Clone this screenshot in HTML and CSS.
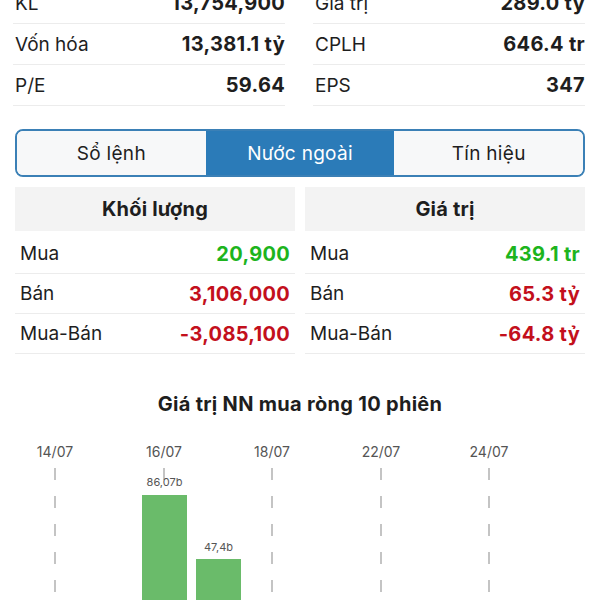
FILE: index.html
```html
<!DOCTYPE html>
<html lang="vi">
<head>
    <meta charset="UTF-8">
    <meta name="viewport" content="width=device-width, initial-scale=1.0">
    <title>Nước ngoài</title>
    <link rel="stylesheet" href="styles.css">
</head>
<body>
    <div class="stats">
        <div class="statsCol">
            <div class="statRow"><span>KL</span><b>13,754,900</b></div>
            <div class="statRow"><span>Vốn hóa</span><b>13,381.1 tỷ</b></div>
            <div class="statRow"><span>P/E</span><b>59.64</b></div>
        </div>
        <div class="statsCol">
            <div class="statRow"><span>Giá trị</span><b>289.0 tỷ</b></div>
            <div class="statRow"><span>CPLH</span><b>646.4 tr</b></div>
            <div class="statRow"><span>EPS</span><b>347</b></div>
        </div>
    </div>

    <div class="tabs">
        <div class="tab">Sổ lệnh</div>
        <div class="tab active">Nước ngoài</div>
        <div class="tab">Tín hiệu</div>
    </div>

    <div class="foreign">
        <div class="foreignCol">
            <div class="foreignHead">Khối lượng</div>
            <div class="foreignRow"><span>Mua</span><b class="up">20,900</b></div>
            <div class="foreignRow"><span>Bán</span><b class="down">3,106,000</b></div>
            <div class="foreignRow"><span>Mua-Bán</span><b class="down">-3,085,100</b></div>
        </div>
        <div class="foreignCol">
            <div class="foreignHead">Giá trị</div>
            <div class="foreignRow"><span>Mua</span><b class="up">439.1 tr</b></div>
            <div class="foreignRow"><span>Bán</span><b class="down">65.3 tỷ</b></div>
            <div class="foreignRow"><span>Mua-Bán</span><b class="down">-64.8 tỷ</b></div>
        </div>
    </div>

    <div class="chartTitle">Giá trị NN mua ròng 10 phiên</div>

    <svg class="chart" width="600" height="180" viewBox="0 0 600 180">
        <g class="grid">
            <line x1="55" y1="38" x2="55" y2="180"></line>
            <line x1="164" y1="38" x2="164" y2="180"></line>
            <line x1="272" y1="38" x2="272" y2="180"></line>
            <line x1="381" y1="38" x2="381" y2="180"></line>
            <line x1="489" y1="38" x2="489" y2="180"></line>
        </g>
        <g class="axis">
            <text x="55" y="27">14/07</text>
            <text x="164" y="27">16/07</text>
            <text x="272" y="27">18/07</text>
            <text x="381" y="27">22/07</text>
            <text x="489" y="27">24/07</text>
        </g>
        <rect class="bar" x="142" y="65" width="45" height="115"></rect>
        <rect class="bar" x="196" y="129" width="45" height="51"></rect>
        <g class="barLabel">
            <text x="164.5" y="56">86,07b</text>
            <text x="218.5" y="121">47,4b</text>
        </g>
    </svg>
</body>
</html>
```

FILE: styles.css
```css
body {
    font-family: Inter, "Noto Sans", sans-serif;
    margin: 0;
    padding: 0;
    background-color: #fff;
    color: #1e1e1e;
    overflow: hidden;
    height: 600px;
}

.stats {
    display: grid;
    grid-template-columns: 1fr 1fr;
    gap: 28px;
    padding: 0 15px 0 13px;
    margin-top: -17px;
}

.statRow {
    display: flex;
    justify-content: space-between;
    align-items: center;
    height: 40px;
    padding-left: 2px;
    border-bottom: 1px solid #ececec;
    font-size: 19px;
}

.statRow b,
.foreignRow b {
    font-size: 20px;
    font-weight: 700;
    letter-spacing: 0.3px;
}

.tabs {
    display: flex;
    margin: 23px 15px 0;
    height: 44px;
    border: 2px solid #3b80b6;
    border-radius: 8px;
    overflow: hidden;
}

.tab {
    flex: 1;
    display: flex;
    align-items: center;
    justify-content: center;
    background-color: #f7f8f9;
    font-size: 19px;
    letter-spacing: 0.3px;
}

.tab.active {
    background-color: #2b7bb8;
    color: #fff;
}

.foreign {
    display: grid;
    grid-template-columns: 1fr 1fr;
    gap: 10px;
    padding: 0 15px;
    margin-top: 10px;
}

.foreignHead {
    height: 44px;
    display: flex;
    align-items: center;
    justify-content: center;
    background-color: #f3f3f3;
    font-size: 20px;
    font-weight: 700;
    letter-spacing: 0.2px;
    margin-bottom: 3px;
}

.foreignRow {
    display: flex;
    justify-content: space-between;
    align-items: center;
    height: 39px;
    padding: 0 5px;
    border-bottom: 1px solid #ececec;
    font-size: 19px;
}

.up {
    color: #1db41d;
}

.down {
    color: #c3101c;
}

.chartTitle {
    margin-top: 38px;
    line-height: 24px;
    text-align: center;
    font-size: 20px;
    font-weight: 700;
    letter-spacing: 0.3px;
}

.chart {
    display: block;
    margin-top: 14px;
}

.grid line {
    stroke: #c4c4c4;
    stroke-width: 2;
    stroke-dasharray: 12 16;
}

.axis text {
    font-family: Inter, sans-serif;
    font-size: 14px;
    fill: #555;
    text-anchor: middle;
}

.bar {
    fill: #6abb6a;
}

.barLabel text {
    font-family: Inter, sans-serif;
    font-size: 11px;
    fill: #555;
    text-anchor: middle;
}
```
